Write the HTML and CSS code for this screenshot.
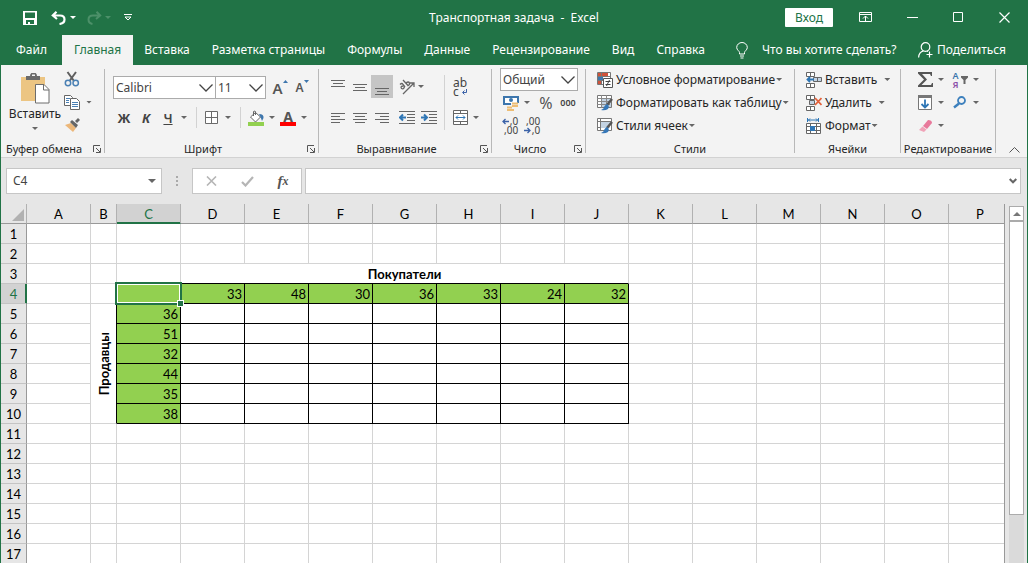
FILE: index.html
```html
<!DOCTYPE html>
<html lang="ru">
<head>
<meta charset="utf-8">
<title>Транспортная задача - Excel</title>
<link rel="stylesheet" href="styles.css">
</head>
<body>
<div class="app">
<header class="titlebar">
  <div class="quick">
    <button class="tool save" aria-label="Сохранить"><svg width="14" height="14" viewBox="0 0 14 14"><path fill="#fff" fill-rule="evenodd" d="M0 0h14v14H0zM2 1.5V7h10V1.5zM3 9v4h2v-2h2v2h4V9z"/></svg></button>
    <button class="tool undo" aria-label="Отменить"><svg width="16" height="14" viewBox="0 0 16 14" fill="none" stroke="#fff" stroke-width="2.200"><path d="M5.500.8 1.800 4.500 6 8M2 4.500h7c3 0 4.500 1.600 4.500 4S12 12.500 8.500 13"/></svg></button>
    <button class="caret light" aria-label="Список отмены"></button>
    <button class="tool redo" aria-label="Вернуть"><svg width="16" height="14" viewBox="0 0 16 14" fill="none" stroke="#4c9069" stroke-width="2"><path d="M10.500.8l3.700 3.700L10 8M14 4.500H7c-3 0-4.500 1.600-4.500 4S4 12.500 6.500 13"/></svg></button>
    <button class="caret faded" aria-label="Список возврата"></button>
    <button class="tool custom" aria-label="Настройка панели"><svg width="10" height="8" viewBox="0 0 10 8" fill="none" stroke="#fff"><path d="M1 .5h8M2 3l3 3 3-3z"/></svg></button>
  </div>
  <h1>Транспортная задача&nbsp; -&nbsp; Excel</h1>
  <div class="window">
    <button class="login">Вход</button>
    <button class="winbtn" aria-label="Параметры ленты"><svg width="14" height="11" viewBox="0 0 14 11" fill="none" stroke="#fff"><path d="M.5.500h12v9H.500zM.500 2.500h12M6.500 9V4M4 6.500 6.500 4 9 6.500"/></svg></button>
    <button class="winbtn" aria-label="Свернуть"><svg width="11" height="11" viewBox="0 0 11 11"><path stroke="#fff" d="M0 5.500h11"/></svg></button>
    <button class="winbtn" aria-label="Развернуть"><svg width="11" height="11" viewBox="0 0 11 11"><path fill="none" stroke="#fff" d="M.5.500h9v9h-9z"/></svg></button>
    <button class="winbtn" aria-label="Закрыть"><svg width="11" height="11" viewBox="0 0 11 11"><path stroke="#fff" stroke-width="1.200" d="m.5.500 10 10M10.500.500l-10 10"/></svg></button>
  </div>
</header>
<nav class="tabs">
  <a href="#file" class="tab file">Файл</a>
  <a href="#home" class="tab active">Главная</a>
  <a href="#insert" class="tab">Вставка</a>
  <a href="#layout" class="tab">Разметка страницы</a>
  <a href="#formulas" class="tab">Формулы</a>
  <a href="#data" class="tab">Данные</a>
  <a href="#review" class="tab">Рецензирование</a>
  <a href="#view" class="tab">Вид</a>
  <a href="#help" class="tab">Справка</a>
  <button class="tell"><svg width="12" height="17" viewBox="0 0 12 17" fill="none" stroke="#fff"><path d="M3.500 12V10.500C3.500 9 .7 8 .7 5.500a5.300 5 0 0 1 10.600 0C11.300 8 8.500 9 8.500 10.500V12zM4 14h4M4.500 16h3"/></svg><span>Что вы хотите сделать?</span></button>
  <button class="share"><svg width="15" height="16" viewBox="0 0 15 16" fill="none" stroke="#fff" stroke-width="1.200"><circle cx="7.500" cy="5" r="4.300"/><path d="M.6 15.500C.8 11.500 2.500 9.500 5.500 8.800M9 9l1 .5M11.500 9.500v6M8.500 12.500h6"/></svg><span>Поделиться</span></button>
</nav>
<section class="ribbon">
  <div class="group clipboard">
    <div class="body">
      <button class="paste"><svg width="29" height="31" viewBox="0 0 29 31"><path fill="#ecc583" d="M0 4h24v24H0z"/><path fill="#6a6a6a" d="M5 7V3h4a3.500 3.500 0 0 1 7 0h3v4zM11 3h3V1.500h-3z"/><path fill="#fff" stroke="#6d6d6d" d="M14.500 11.500H23l5 5v13.500H14.500z"/><path fill="none" stroke="#6d6d6d" d="M22.500 11.500V17H28"/></svg><span>Вставить</span><i class="caret"></i></button>
      <div class="stack">
        <button class="tool" aria-label="Вырезать"><svg width="16" height="16" viewBox="0 0 16 16" fill="none"><path stroke="#5f5f5f" stroke-width="2" d="m3.500 1 6.500 9M12 1 5.500 10"/><circle cx="4" cy="12" r="2.700" stroke="#4a80b4" stroke-width="1.500"/><circle cx="11.700" cy="12" r="2.700" stroke="#4a80b4" stroke-width="1.500"/></svg></button>
        <div class="line"><button class="tool" aria-label="Копировать"><svg width="16" height="15" viewBox="0 0 16 15"><path fill="#fff" stroke="#666" d="M.5.500h6l2 2v8h-8z"/><path stroke="#4a80b4" d="M2 3.500h4M2 5.500h3M2 7.500h3"/><path fill="#fff" stroke="#666" d="M6.500 3.500h6l3 3v8h-9z"/><path stroke="#4a80b4" d="M8 7.500h6M8 9.500h6M8 11.500h6"/></svg></button><button class="caret" aria-label="Варианты копирования"></button></div>
        <button class="tool" aria-label="Формат по образцу"><svg width="17" height="14" viewBox="0 0 17 14"><path fill="#ecb779" d="m1 7 6-2 5 5-3 4z"/><path fill="#666" d="m6 4 2-2 6 5-2 3zM11 3l3-3 2 2-3 3z"/></svg></button>
      </div>
    </div>
    <footer>Буфер обмена<button class="launch" aria-label="Буфер обмена: параметры"><svg width="8" height="8" viewBox="0 0 8 8" fill="none" stroke="#555"><path d="M.5 7V.500H7M3 3l4 4M7.500 3v4.500H3"/></svg></button></footer>
  </div>

  <div class="group font">
    <div class="body">
      <div class="line fontrow">
        <label class="combo family"><select aria-label="Шрифт"><option>Calibri</option></select><svg width="14" height="8" viewBox="0 0 14 8"><path fill="none" stroke="#444" stroke-width="1.300" d="m.5.500 6.500 6.500L13.500.500"/></svg></label>
        <label class="combo size"><select aria-label="Размер шрифта"><option>11</option></select><svg width="14" height="8" viewBox="0 0 14 8"><path fill="none" stroke="#444" stroke-width="1.300" d="m.5.500 6.500 6.500L13.500.500"/></svg></label>
        <button class="tool grow" aria-label="Увеличить размер шрифта"><b>A</b><svg width="5" height="3" viewBox="0 0 5 3"><path fill="#3d76ad" d="M0 3 2.500 0 5 3z"/></svg></button>
        <button class="tool grow small" aria-label="Уменьшить размер шрифта"><b>A</b><svg width="5" height="3" viewBox="0 0 5 3"><path fill="#3d76ad" d="m0 0 2.500 3L5 0z"/></svg></button>
      </div>
      <div class="line stylerow">
        <button class="tool glyph"><b>Ж</b></button>
        <button class="tool glyph"><em>К</em></button>
        <button class="tool glyph"><u>Ч</u></button>
        <button class="caret" aria-label="Подчеркивание"></button>
        <i class="rule"></i>
        <button class="tool" aria-label="Границы"><svg width="14" height="14" viewBox="0 0 14 14" fill="none" stroke="#6a6a6a"><path fill="#fff" d="M.5.500h12v12H.500z"/><path d="M6.500 0v13M0 6.500h13"/></svg></button>
        <button class="caret" aria-label="Виды границ"></button>
        <i class="rule"></i>
        <button class="tool" aria-label="Цвет заливки"><svg width="16" height="16" viewBox="0 0 16 16"><path fill="#fff" stroke="#666" d="m2.500 7 5-4.500 5 4.500L7.500 12z"/><path fill="none" stroke="#666" d="M5.500 6V1.500q0-1 2 0V5"/><path fill="#3d76ad" d="M11 4q5 0 4.500 4L14 11q-1-3-3-7"/><path fill="#92d050" d="M0 12h16v4H0z"/></svg></button>
        <button class="caret" aria-label="Цвета заливки"></button>
        <button class="tool fontcolor" aria-label="Цвет шрифта"><b>A</b></button>
        <button class="caret" aria-label="Цвета шрифта"></button>
      </div>
    </div>
    <footer>Шрифт<button class="launch" aria-label="Шрифт: параметры"><svg width="8" height="8" viewBox="0 0 8 8" fill="none" stroke="#555"><path d="M.5 7V.500H7M3 3l4 4M7.500 3v4.500H3"/></svg></button></footer>
  </div>

  <div class="group align">
    <div class="body">
      <div class="alignleft">
        <div class="line">
          <button class="tool" aria-label="По верхнему краю"><svg width="14" height="16" viewBox="0 0 14 16" stroke="#666"><path d="M0 1.500h14M2 4.500h10M0 7.500h14"/></svg></button>
          <button class="tool" aria-label="По середине"><svg width="14" height="16" viewBox="0 0 14 16" stroke="#666"><path d="M0 5.500h14M2 8.500h10M0 11.500h14"/></svg></button>
          <button class="tool pressed" aria-label="По нижнему краю"><svg width="14" height="16" viewBox="0 0 14 16" stroke="#666"><path d="M0 9.500h14M2 12.500h10M0 15.500h14"/></svg></button>
          <button class="tool apart" aria-label="Ориентация"><svg width="18" height="16" viewBox="0 0 18 16" fill="none" stroke="#666" stroke-width="1.300"><path d="M2 5.500q2-2 3 0l2 2.500M5.500 7Q2 7 3.500 9.500q2 1 3-1.500M5 1l5 5.500M8 4q2.500-2 3.500 0 .5 2-2 3M5 15 16 4M12 4h4v4"/></svg></button>
          <button class="caret" aria-label="Варианты ориентации"></button>
        </div>
        <div class="line">
          <button class="tool" aria-label="По левому краю"><svg width="14" height="12" viewBox="0 0 14 12" stroke="#666"><path d="M0 1.500h14M0 4.500h9M0 7.500h14M0 10.500h9"/></svg></button>
          <button class="tool" aria-label="По центру"><svg width="14" height="12" viewBox="0 0 14 12" stroke="#666"><path d="M0 1.500h14M2 4.500h10M0 7.500h14M2 10.500h10"/></svg></button>
          <button class="tool" aria-label="По правому краю"><svg width="14" height="12" viewBox="0 0 14 12" stroke="#666"><path d="M0 1.500h14M5 4.500h9M0 7.500h14M5 10.500h9"/></svg></button>
          <button class="tool apart" aria-label="Уменьшить отступ"><svg width="16" height="13" viewBox="0 0 16 13" fill="none" stroke="#666"><path d="M0 .5h16M8 3.500h8M8 6.500h8M8 9.500h8M0 12.500h16"/><path stroke="#2f76b5" stroke-width="2" d="M7 6.500H1.500M4 3.500l-3 3 3 3"/></svg></button>
          <button class="tool" aria-label="Увеличить отступ"><svg width="16" height="13" viewBox="0 0 16 13" fill="none" stroke="#666"><path d="M0 .5h16M8 3.500h8M8 6.500h8M8 9.500h8M0 12.500h16"/><path stroke="#2f76b5" stroke-width="2" d="M0 6.500h5.500M3 3.500l3 3-3 3"/></svg></button>
        </div>
      </div>
      <i class="rule tall"></i>
      <div class="alignright">
        <button class="tool wrap" aria-label="Перенести текст"><span>ab</span><span>c</span><svg width="5" height="6" viewBox="0 0 5 6" fill="none" stroke="#3b62a8"><path d="M4.500 0v3.500H1M2.500 1.500l-2 2 2 2"/></svg></button>
        <div class="line"><button class="tool" aria-label="Объединить"><svg width="15" height="15" viewBox="0 0 15 15" fill="none" stroke="#666"><path fill="#fff" d="M.5.500h14v14H.500z"/><path d="M0 3.500h15M0 11.500h15M7.500 0v3.500M7.500 11.500V15"/><path stroke="#2f76b5" d="M3 7.500h9M5 5.500l-2 2 2 2M10 5.500l2 2-2 2"/></svg></button><button class="caret" aria-label="Варианты объединения"></button></div>
      </div>
    </div>
    <footer>Выравнивание<button class="launch" aria-label="Выравнивание: параметры"><svg width="8" height="8" viewBox="0 0 8 8" fill="none" stroke="#555"><path d="M.5 7V.500H7M3 3l4 4M7.500 3v4.500H3"/></svg></button></footer>
  </div>

  <div class="group number">
    <div class="body">
      <label class="combo"><select aria-label="Числовой формат"><option>Общий</option></select><svg width="14" height="8" viewBox="0 0 14 8"><path fill="none" stroke="#444" stroke-width="1.300" d="m.5.500 6.500 6.500L13.500.500"/></svg></label>
      <div class="line">
        <button class="tool" aria-label="Финансовый формат"><svg width="16" height="16" viewBox="0 0 16 16"><path fill="#3d76ad" d="M0 1h16v9H0z"/><path fill="#fff" d="M2 3h12v5H2z"/><circle cx="8" cy="5" r="2" fill="#3d76ad"/><path stroke="#f3f3f3" stroke-width="8" d="M8 12h8"/><path stroke="#edbd74" stroke-width="2" d="M9 8.500h6M9 11h6M4 12.500h5M4 15h7"/></svg></button>
        <button class="caret" aria-label="Валюты"></button>
        <button class="tool percent">%</button>
        <button class="tool zeros">000</button>
      </div>
      <div class="line">
        <button class="tool digits" aria-label="Увеличить разрядность"><span class="short"><svg width="7" height="7" viewBox="0 0 7 7" fill="none" stroke="#3b62a8" stroke-width="1.300"><path d="M7 3.500H1M3.500 1 1 3.500 3.500 6"/></svg>,0</span><span>,00</span></button>
        <button class="tool digits" aria-label="Уменьшить разрядность"><span>,00</span><span class="short"><svg width="7" height="7" viewBox="0 0 7 7" fill="none" stroke="#3b62a8" stroke-width="1.300"><path d="M0 3.500h6M3.500 1 6 3.500 3.500 6"/></svg>,0</span></button>
      </div>
    </div>
    <footer>Число<button class="launch" aria-label="Число: параметры"><svg width="8" height="8" viewBox="0 0 8 8" fill="none" stroke="#555"><path d="M.5 7V.500H7M3 3l4 4M7.500 3v4.500H3"/></svg></button></footer>
  </div>

  <div class="group styles">
    <div class="body">
      <button class="row"><svg width="16" height="16" viewBox="0 0 16 16"><path fill="#fff" stroke="#777" d="M.5.500h13v12H.500zM0 4.500h13M0 8.500h13M4.500 0v13"/><path fill="#d0523a" d="M1 1h3v3H1zM5 1h6v3H5zM1 9h3v3H1z"/><path fill="#3d76ad" d="M1 5h5v3H1z"/><path fill="#fff" stroke="#555" d="M6.500 6.500h9v9h-9z"/><path stroke="#444" d="M8.500 9.500h5M8.500 12.500h5M12.500 8l-3 6"/></svg><span>Условное форматирование</span><i class="caret"></i></button>
      <button class="row"><svg width="16" height="16" viewBox="0 0 16 16"><path fill="#fff" stroke="#777" d="M.5.500h14v12H.500z"/><path fill="#c3d3e3" d="M5 4h9v8H5z"/><path fill="none" stroke="#888" d="M0 3.500h15M0 6.500h15M0 9.500h13M4.500 0v13M9.500 0v10"/><path stroke="#555" stroke-width="2.500" d="m15 4-5 6"/><path fill="#3678b8" d="M10 9q3 2 1 5-3 2-7 1 3-1 3-3 1-2 3-3"/></svg><span>Форматировать как таблицу</span><i class="caret"></i></button>
      <button class="row"><svg width="16" height="16" viewBox="0 0 16 16"><path fill="#fff" stroke="#777" d="M.5.500h14v12H.500zM0 3.500h15M3.500 0v13M0 9.500h4"/><path fill="#c3d3e3" d="M4 4h9v6H4z"/><path stroke="#555" stroke-width="2.500" d="m15 4-5 6"/><path fill="#3678b8" d="M10 9q3 2 1 5-3 2-7 1 3-1 3-3 1-2 3-3"/></svg><span>Стили ячеек</span><i class="caret"></i></button>
    </div>
    <footer>Стили</footer>
  </div>

  <div class="group cells">
    <div class="body">
      <button class="row"><svg width="16" height="16" viewBox="0 0 16 16" fill="#fff" stroke="#666"><path d="M.5.500h8v4h-8zM4.500 0v5M.500 11.500h8v4h-8zM4.500 11v5"/><path fill="#c3d3e3" d="M7.500 5.500h8v4h-8zM11.500 5.500v4"/><path fill="none" stroke="#2f76b5" stroke-width="1.800" d="M8 7.500H1.500M4 5 1.500 7.500 4 10"/></svg><span>Вставить</span><i class="caret far"></i></button>
      <button class="row"><svg width="16" height="16" viewBox="0 0 16 16" fill="#fff" stroke="#666"><path d="M.5.500h8v4h-8zM4.500 0v5M.500 11.500h8v4h-8zM4.500 11v5"/><path fill="#c3d3e3" d="M3.500 5.500h5v4h-5z"/><path fill="none" stroke="#e2603a" stroke-width="1.800" d="m9 3 6.500 7M15.500 3 9 10"/></svg><span>Удалить</span><i class="caret far"></i></button>
      <button class="row"><svg width="16" height="16" viewBox="0 0 16 16" fill="none" stroke="#666"><path stroke="#2f76b5" d="M1.500 0v4M12.500 0v4M2 2h10M4 .5 2.500 2 4 3.500M10 .5 11.500 2 10 3.500"/><path fill="#fff" d="M.5 5.500h14v10H.500z"/><path d="M0 8.500h15M0 12.500h15M4.500 5v11M10.500 5v11"/><path fill="#2f76b5" stroke="none" d="M4 8h5v5H4z"/></svg><span>Формат</span><i class="caret"></i></button>
    </div>
    <footer>Ячейки</footer>
  </div>

  <div class="group edit">
    <div class="body">
      <div class="line"><button class="tool" aria-label="Автосумма"><svg width="15" height="15" viewBox="0 0 15 15"><path fill="#555" d="M0 0h14v4h-1l-1-2H4l5 5.500L3.500 13H13l1-2h1v4H0v-1.500l6-6-6-6z"/></svg></button><button class="caret" aria-label="Функции"></button>
      <button class="tool sort" aria-label="Сортировка и фильтр"><span><b>А</b><b>Я</b></span><svg width="7" height="8" viewBox="0 0 7 8"><path fill="#666" d="M0 0h7v1.500L4.500 4v4h-2V4L0 1.500z"/></svg></button><button class="caret" aria-label="Варианты сортировки"></button></div>
      <div class="line"><button class="tool" aria-label="Заполнить"><svg width="14" height="15" viewBox="0 0 14 15"><path fill="#fff" stroke="#777" d="M.5.500h13v14H.500z"/><path fill="#777" d="M0 0h14v3H0z"/><path fill="none" stroke="#2f76b5" stroke-width="1.800" d="M7 4.500v8M3.500 9 7 12.500 10.500 9"/></svg></button><button class="caret" aria-label="Направления заполнения"></button>
      <button class="tool find" aria-label="Найти и выделить"><svg width="14" height="13" viewBox="0 0 14 13" fill="none" stroke="#3d80bd"><circle cx="8.500" cy="4.500" r="3.500" stroke-width="1.800"/><path stroke-width="2.500" d="m6 7.500-5 4"/></svg></button><button class="caret" aria-label="Варианты поиска"></button></div>
      <div class="line"><button class="tool" aria-label="Очистить"><svg width="13" height="12" viewBox="0 0 13 12"><path fill="#e8799b" d="M9 0q4 0 4 3L8 9 4 6z"/><path fill="#f0a3b8" d="m3.500 6.500 4 3L5 12 0 10z"/></svg></button><button class="caret" aria-label="Варианты очистки"></button></div>
    </div>
    <footer>Редактирование</footer>
  </div>
  <button class="collapse" aria-label="Свернуть ленту"><svg width="11" height="6" viewBox="0 0 11 6"><path fill="none" stroke="#555" d="m.5 5.500 5-5 5 5"/></svg></button>
</section>

<section class="formula">
  <div class="namebox"><input aria-label="Имя ячейки" value="C4"><button class="caret big" aria-label="Список имен"></button></div>
  <i class="grip"></i>
  <div class="fxbox">
    <button class="tool" aria-label="Отмена"><svg width="11" height="10" viewBox="0 0 11 10"><path stroke="#b5b5b5" stroke-width="1.600" d="m1 .5 9 9M10 .5l-9 9"/></svg></button>
    <button class="tool" aria-label="Ввод"><svg width="13" height="11" viewBox="0 0 13 11"><path fill="none" stroke="#b5b5b5" stroke-width="2.200" d="m1 6 3.500 3.500L12 1"/></svg></button>
    <button class="tool fx" aria-label="Вставить функцию">f<sub>x</sub></button>
  </div>
  <div class="entry"><input aria-label="Строка формул"><button class="tool" aria-label="Развернуть строку формул"><svg width="8" height="6" viewBox="0 0 8 6"><path fill="none" stroke="#666" stroke-width="2" d="m.7 1 3.300 3.300L7.300 1"/></svg></button></div>
</section>

<main class="work">
  <div class="sheet">
  <table>
    <colgroup><col class="c-head"><col class="c-cell"><col class="c-narrow"><col class="c-cell"><col class="c-cell"><col class="c-cell"><col class="c-cell"><col class="c-cell"><col class="c-cell"><col class="c-cell"><col class="c-cell"><col class="c-cell"><col class="c-cell"><col class="c-cell"><col class="c-cell"><col class="c-cell"><col></colgroup>
    <thead><tr><th class="corner"><svg width="12" height="12" viewBox="0 0 12 12"><path fill="#b1b1b1" d="M12 0v12H0z"/></svg></th><th>A</th><th>B</th><th class="current">C</th><th>D</th><th>E</th><th>F</th><th>G</th><th>H</th><th>I</th><th>J</th><th>K</th><th>L</th><th>M</th><th>N</th><th>O</th><th class="pcol">P</th></tr></thead>
    <tbody>
    <tr><th>1</th><td><td><td><td><td><td><td><td><td><td><td><td><td><td><td><td></tr>
    <tr><th>2</th><td><td><td><td><td><td><td><td><td><td><td><td><td><td><td><td></tr>
    <tr><th>3</th><td><td><td class="under"><td class="under title" colspan="7">Покупатели<td><td><td><td><td><td></tr>
    <tr><th class="current">4</th><td><td class="side"><td class="box green selected"><td class="box green">33<td class="box green">48<td class="box green">30<td class="box green">36<td class="box green">33<td class="box green">24<td class="box green">32<td><td><td><td><td><td></tr>
    <tr><th>5</th><td><td class="side title" rowspan="6"><span class="vertical">Продавцы</span><td class="box green">36<td class="box"><td class="box"><td class="box"><td class="box"><td class="box"><td class="box"><td class="box"><td><td><td><td><td><td></tr>
    <tr><th>6</th><td><td class="box green">51<td class="box"><td class="box"><td class="box"><td class="box"><td class="box"><td class="box"><td class="box"><td><td><td><td><td><td></tr>
    <tr><th>7</th><td><td class="box green">32<td class="box"><td class="box"><td class="box"><td class="box"><td class="box"><td class="box"><td class="box"><td><td><td><td><td><td></tr>
    <tr><th>8</th><td><td class="box green">44<td class="box"><td class="box"><td class="box"><td class="box"><td class="box"><td class="box"><td class="box"><td><td><td><td><td><td></tr>
    <tr><th>9</th><td><td class="box green">35<td class="box"><td class="box"><td class="box"><td class="box"><td class="box"><td class="box"><td class="box"><td><td><td><td><td><td></tr>
    <tr><th>10</th><td><td class="box green">38<td class="box"><td class="box"><td class="box"><td class="box"><td class="box"><td class="box"><td class="box"><td><td><td><td><td><td></tr>
    <tr><th>11</th><td><td><td><td><td><td><td><td><td><td><td><td><td><td><td><td></tr>
    <tr><th>12</th><td><td><td><td><td><td><td><td><td><td><td><td><td><td><td><td></tr>
    <tr><th>13</th><td><td><td><td><td><td><td><td><td><td><td><td><td><td><td><td></tr>
    <tr><th>14</th><td><td><td><td><td><td><td><td><td><td><td><td><td><td><td><td></tr>
    <tr><th>15</th><td><td><td><td><td><td><td><td><td><td><td><td><td><td><td><td></tr>
    <tr><th>16</th><td><td><td><td><td><td><td><td><td><td><td><td><td><td><td><td></tr>
    <tr><th>17</th><td><td><td><td><td><td><td><td><td><td><td><td><td><td><td><td></tr>
    </tbody>
  </table>
  </div>
  <div class="scroll"><button class="scrollup" aria-label="Прокрутить вверх"><svg width="8" height="4" viewBox="0 0 8 4"><path fill="#777" d="m0 4 4-4 4 4z"/></svg></button><div class="track"><div class="thumb"></div></div></div>
</main>
</div>
</body>
</html>
```
FILE: styles.css
```css
* { box-sizing: border-box; }
body { margin: 0; font: 12px/16px "Noto Sans", "Open Sans", sans-serif; color: #262626; }
button { margin: 0; padding: 0; border: 0; background: none; color: inherit; font: inherit; }
svg { display: block; flex: none; }
.app { display: flex; flex-direction: column; height: 100vh; overflow: hidden; background: #e6e6e6; border: solid #217346; border-width: 0 1px; }

.titlebar { display: grid; grid-template-columns: 1fr auto 1fr; align-items: center; height: 35px; background: #217346; color: #fff; }
.titlebar h1 { margin: 0; font-size: 12px; font-weight: 400; }
.quick { display: flex; align-items: center; padding-left: 22px; }
.quick .save { margin-right: 14px; }
.quick .redo { margin-left: 10px; }
.quick .custom { margin-left: 12px; }
.quick .tool { width: auto; }
.window { display: flex; align-items: center; justify-content: flex-end; }
.login { width: 48px; height: 19px; margin-right: 10px; background: #fff; color: #217346; border-radius: 1px; }
.winbtn { display: flex; justify-content: center; width: 46px; }

.tabs { display: flex; height: 30px; flex: none; background: #217346; color: #fff; }
.tab { padding: 7px 11px; color: #fff; text-decoration: none; white-space: nowrap; }
.tab.file { padding: 7px 15px; }
.tab.active { padding: 7px 12px; background: #f3f3f3; color: #217346; }
.tell, .share { display: flex; align-items: center; white-space: nowrap; }
.tell { gap: 14px; margin-left: 20px; }
.share { gap: 4px; margin: 0 21px 0 auto; }

.tool { display: flex; align-items: center; justify-content: center; width: 22px; min-height: 16px; flex: none; }
.line { display: flex; align-items: center; }
.caret { display: block; flex: none; width: 6px; height: 3px; background: #666; clip-path: polygon(0 0, 100% 0, 50% 100%); }
.caret.light { background: #fff; margin-left: 3px; }
.caret.faded { background: #4c9069; margin-left: 3px; }
.caret.big { width: 8px; height: 4px; }
.rule { width: 1px; height: 21px; background: #d2d2d2; }
.rule.tall { height: 55px; }

.ribbon { display: flex; flex: none; height: 93px; padding: 4px 0; background: #f3f3f3; border-bottom: 1px solid #d2d2d2; }
.group { display: flex; flex-direction: column; flex: none; height: 84px; border-right: 1px solid #b8b8b8; }
.body { flex: 1; }
.group footer { display: flex; height: 16px; margin-bottom: -4px; padding-right: 17px; justify-content: center; position: relative; white-space: nowrap; font-size: 11px; }
.launch { position: absolute; right: 3px; top: 4px; }

.clipboard { width: 104px; }
.clipboard .body { display: flex; }
.clipboard footer { justify-content: flex-start; padding: 0 0 0 5px; }
.paste { display: flex; flex-direction: column; align-items: center; width: 60px; padding: 4px 0 0 8px; }
.paste .caret { margin-top: 5px; }
.paste span { margin-top: 2px; }
.stack { display: flex; flex-direction: column; gap: 7px; padding-top: 2px; }
.stack .caret { margin-left: 3px; }

.font { width: 214px; }
.font .body, .number .body { padding-left: 8px; }
.combo { position: relative; display: block; height: 23px; }
.combo select { width: 100%; height: 100%; padding: 0 2px; appearance: none; border: 1px solid #ababab; border-radius: 0; background: #fff; color: #444; font: inherit; }
.combo svg { position: absolute; right: 3px; top: 8px; pointer-events: none; }
.fontrow { padding-top: 7px; }
.combo.family { width: 103px; }
.combo.size { width: 51px; margin-left: -1px; }
.grow { align-items: flex-start; margin-left: 3px; color: #555; font-size: 15px; }
.grow b { font-weight: 600; }
.grow.small { margin-left: 0; font-size: 12px; }
.glyph { color: #444; font-size: 13px; }
.glyph em { font-weight: 700; }
.glyph u { font-weight: 600; }
.stylerow { padding-top: 8px; }
.stylerow .rule { margin: 0 4px 0 7px; }
.stylerow .caret { margin: 0 2px; }
.fontcolor { color: #555; font-size: 14px; }
.fontcolor b { width: 16px; height: 16px; line-height: 13px; border-bottom: 4px solid #f00; }

.align { width: 173px; }
.align .body { display: flex; align-items: flex-start; padding: 6px 0 0 8px; }
.align .line { height: 23px; }
.alignleft { display: flex; flex-direction: column; gap: 8px; width: 117px; }
.pressed { height: 23px; background: #c5c5c5; }
.apart { margin-left: 3px; }
.alignright { display: flex; flex-direction: column; gap: 8px; padding-left: 4px; }
.wrap { display: grid; grid-template-rows: 9px 9px; align-content: center; justify-content: start; height: 23px; padding-left: 4px; color: #444; line-height: 9px; text-align: left; position: relative; }
.wrap svg { position: absolute; right: 4px; bottom: 3px; }
.alignright .caret { margin-left: 2px; }

.number { width: 94px; }
.number .combo { width: 78px; margin-top: -1px; }
.number .line { height: 23px; }
.number .line .caret { margin: 0 5px 0 2px; }
.percent { color: #555; font-size: 16px; }
.zeros { color: #444; font-size: 9px; font-weight: 600; }
.digits { display: grid; grid-template-rows: 9px 9px; align-content: center; justify-items: end; padding-right: 2px; color: #444; font-size: 10px; line-height: 9px; }
.short { display: flex; align-items: center; gap: 1px; }

.row { display: flex; align-items: center; height: 23px; white-space: nowrap; }
.row span { margin: 0 1px 0 3px; }
.row .far { margin-left: 6px; }
.styles { width: 209px; }
.styles .body, .cells .body { margin-top: -1px; padding-left: 11px; }
.styles footer, .cells footer, .edit footer { padding: 0; }
.cells { width: 106px; }
.edit { width: 95px; }
.edit .body { margin-top: -1px; padding-left: 13px; }
.edit .line { height: 23px; }
.edit .caret { margin-left: 2px; }
.sort { gap: 2px; margin-left: 5px; }
.sort span { display: grid; font-size: 9px; line-height: 9px; color: #3d76ad; }
.sort b { font-weight: 600; }
.sort b + b { color: #8a4fa8; }
.find { margin-left: 5px; }
.collapse { align-self: flex-end; margin-left: 13px; }

.formula { display: flex; flex: none; height: 46px; padding: 10px 6px 10px 5px; }
.namebox, .fxbox, .entry { display: flex; align-items: center; background: #fff; border: 1px solid #c6c6c6; }
.namebox { width: 156px; padding-right: 5px; }
.formula input { flex: 1; min-width: 0; padding: 0 6px; border: 0; background: none; font: inherit; color: #444; outline: 0; }
.grip { width: 2px; height: 11px; margin: 8px 14px 0; background: repeating-linear-gradient(#aaa 0 2px, transparent 2px 4px); }
.fxbox { width: 110px; justify-content: space-around; margin-right: 3px; }
.fx { font: italic 700 15px/16px "Liberation Serif", serif; color: #555; }
.fx sub { font-size: 12px; line-height: 8px; }
.entry { flex: 1; }
.entry .tool { width: 14px; }

.work { display: flex; flex: 1; min-height: 0; }
.sheet { flex: 1; min-width: 0; overflow: hidden; }
table { width: 100%; table-layout: fixed; border-collapse: separate; border-spacing: 0; font: 13px/18px Lato, sans-serif; color: #000; border-right: 1px solid #999; background: #fff; }
.c-head { width: 26px; }
.c-cell { width: 64px; }
.c-narrow { width: 26px; }
th, td { height: 20px; padding: 0; border: solid #d4d4d4; border-width: 0 1px 1px 0; white-space: nowrap; }
th { background: #e6e6e6; font-weight: 400; border-right-color: #999; }
thead th { border-color: #b1b1b1; border-bottom-color: #999; }
tbody th { border-bottom-color: #c4c4c4; }
thead .current { background: #d2d2d2; color: #217346; border-bottom-color: #217346; box-shadow: inset 0 -1px #217346; }
tbody .current { background: #d2d2d2; color: #217346; border-right-color: #217346; box-shadow: inset -1px 0 #217346; }
.corner svg { margin: 2px 2px 0 auto; }
tr > :last-child { border-right: 0; }
.pcol { padding-left: 7px; }
.under { border-bottom-color: #000; }
.side { border-right-color: #000; }
.box { border-color: #000; text-align: right; padding-right: 2px; }
.green { background: #92d050; }
.title { font-weight: 700; text-align: center; }
.vertical { writing-mode: vertical-rl; transform: rotate(180deg); vertical-align: middle; }
.selected { position: relative; }
.selected::before { content: ""; position: absolute; inset: -2px; border: 2px solid #217346; box-shadow: inset 0 0 0 1px #fff; }
.selected::after { content: ""; position: absolute; z-index: 1; right: -3px; bottom: -3px; width: 5px; height: 5px; background: #217346; outline: 1px solid #fff; }

.scroll { display: flex; flex-direction: column; width: 15px; margin: 2px 3px 0 4px; }
.scrollup { display: flex; align-items: center; justify-content: center; height: 15px; background: #fff; border: 1px solid #ababab; }
.track { flex: 1; background: #dadada; }
.thumb { height: 86%; background: #fff; border: 1px solid #ababab; }
```
